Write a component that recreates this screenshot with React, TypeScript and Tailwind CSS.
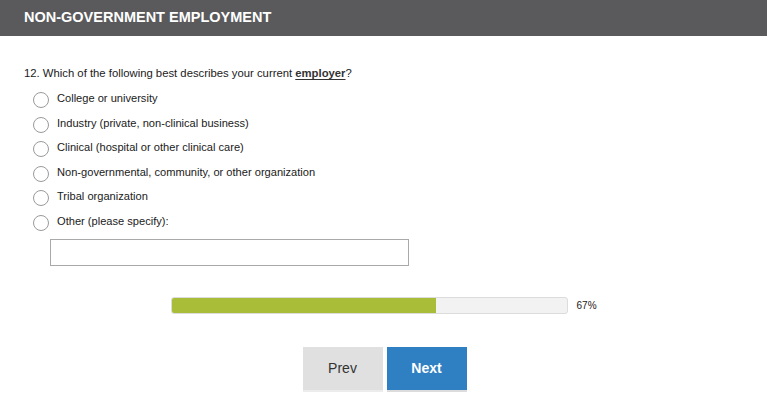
const OPTIONS = [
  "College or university",
  "Industry (private, non-clinical business)",
  "Clinical (hospital or other clinical care)",
  "Non-governmental, community, or other organization",
  "Tribal organization",
  "Other (please specify):",
];

const PROGRESS = 67;

export default function App() {
  return (
    <div className="min-h-[407px] bg-white font-['Liberation_Sans',Arial,sans-serif] text-[#1a1a1a]">
      <div className="flex h-[36px] items-center bg-[#5a5a5c] px-[24px]">
        <h1 className="text-[14.5px] font-bold text-white">NON-GOVERNMENT EMPLOYMENT</h1>
      </div>

      <div className="px-[24px] pt-[29px]">
        <p className="text-[11.3px] leading-[16px]">
          12. Which of the following best describes your current{" "}
          <span className="font-bold text-[#333] underline underline-offset-2">employer</span>?
        </p>

        <ul className="mt-[9px] pl-[9px]">
          {OPTIONS.map((label) => (
            <li key={label} className="flex h-[24.6px] items-start gap-[8px]">
              <span className="mt-[2px] h-[16px] w-[16px] shrink-0 rounded-full border border-[#9a9a9a] bg-white" />
              <span className="text-[11.1px] leading-[16px]">{label}</span>
            </li>
          ))}
        </ul>

        <input
          type="text"
          className="ml-[26px] mt-[1px] block h-[27px] w-[359px] border border-[#a9a9a9] bg-white px-2 text-[12px] outline-none"
        />
      </div>

      <div className="mt-[31px] flex items-center justify-center gap-[9px]">
        <div className="h-[17px] w-[397px] overflow-hidden rounded-[3px] border border-[#dcdcdc] bg-[#f2f2f2]">
          <div className="h-full bg-[#a9bd38]" style={{ width: `${PROGRESS}%` }} />
        </div>
        <span className="w-[20px] text-[10px]">{PROGRESS}%</span>
      </div>

      <div className="mt-[33px] flex justify-center gap-[4px] pl-[2px]">
        <button className="h-[43px] w-[80px] bg-[#e0e0e0] text-[14px] text-[#333] shadow-[0_2px_0_#ececec]">
          Prev
        </button>
        <button className="h-[43px] w-[80px] bg-[#2e80c2] text-[14px] font-bold text-white shadow-[0_2px_0_#dcdcdc]">
          Next
        </button>
      </div>
    </div>
  );
}
